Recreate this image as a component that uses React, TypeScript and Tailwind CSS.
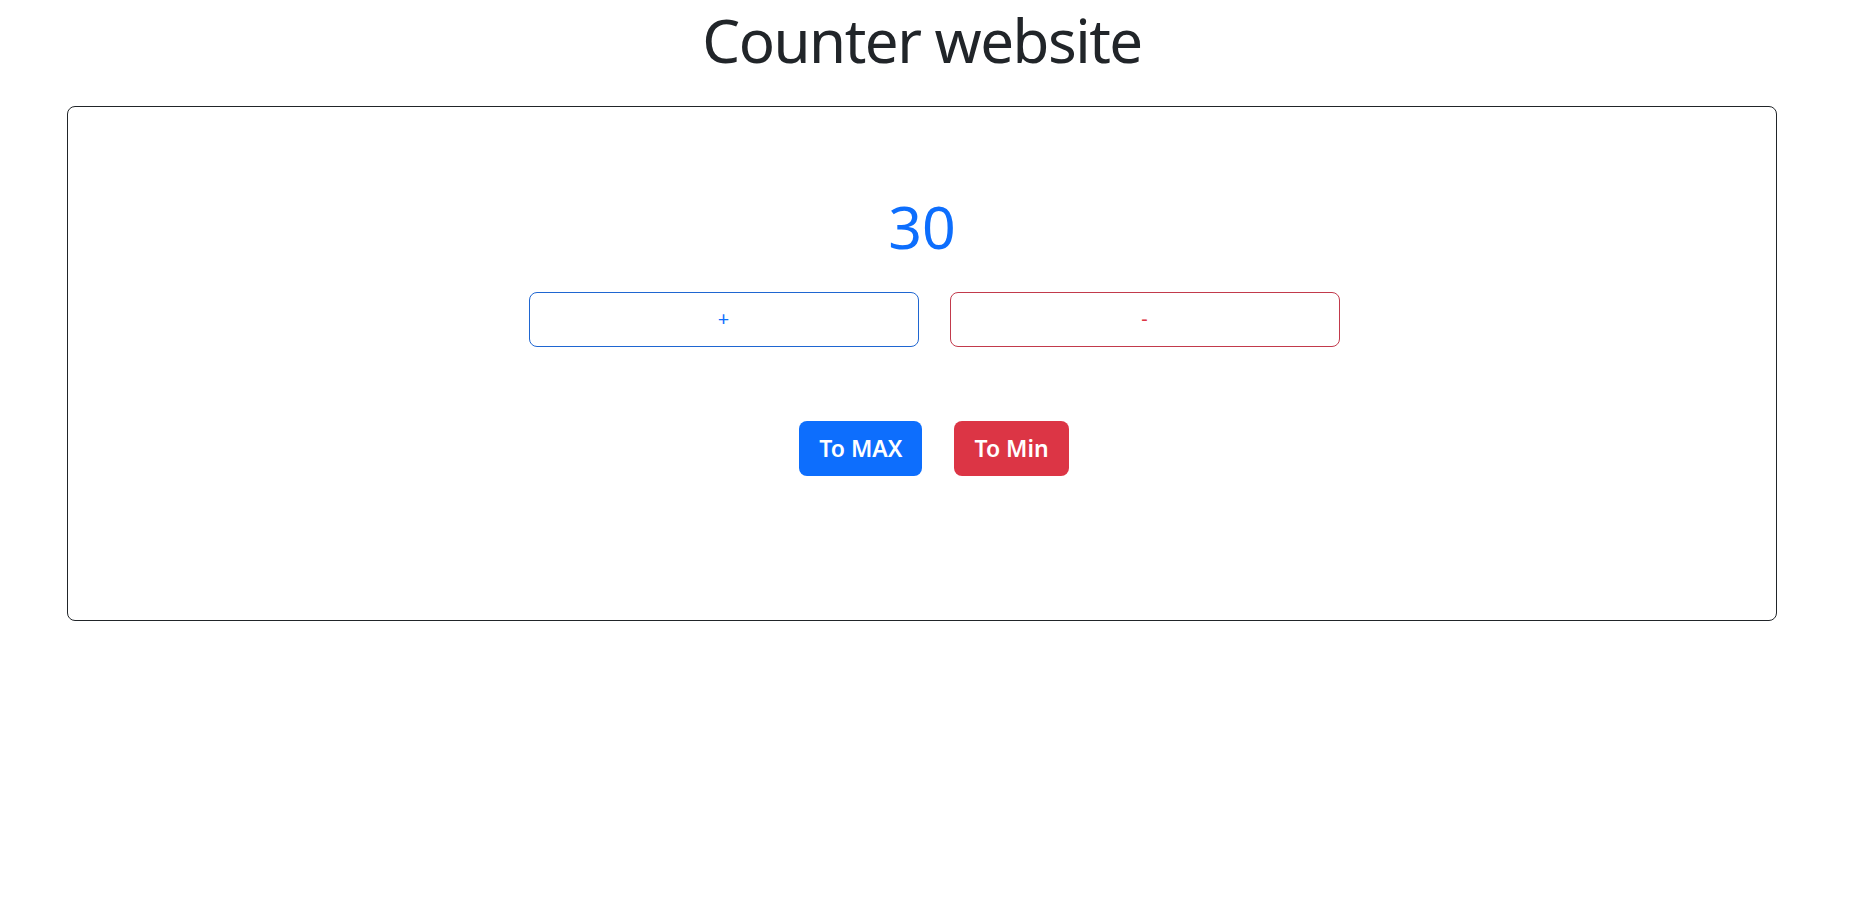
import { useState } from "react";

const MAX = 30;
const MIN = 0;

export default function App() {
  const [count, setCount] = useState(30);

  return (
    <div className="min-h-screen bg-white font-['Noto_Sans','Open_Sans',sans-serif] text-[#212529]">
      <div className="ml-[67px] w-[1710px]">
        <h1 className="pt-[4px] pb-[30px] text-center text-[60px] leading-[72px] font-normal tracking-[-1.5px]">
          Counter website
        </h1>

        <div className="h-[515px] rounded-[8px] border border-[#212529] pt-[84px]">
          <p className="text-center text-[59px] leading-[1.2] text-[#0d6efd]">{count}</p>

          <div className="mt-[30px] flex justify-center gap-[31px] pl-[24px]">
            <button
              onClick={() => setCount((c) => Math.min(MAX, c + 1))}
              className="h-[55px] w-[390px] rounded-[8px] border border-[#1f66d1] text-[20px] text-[#0d6efd]"
            >
              +
            </button>
            <button
              onClick={() => setCount((c) => Math.max(MIN, c - 1))}
              className="h-[55px] w-[390px] rounded-[8px] border border-[#c23a4c] text-[20px] text-[#dc3545]"
            >
              -
            </button>
          </div>

          <div className="mt-[74px] flex justify-center gap-[32px] pl-[24px]">
            <button
              onClick={() => setCount(MAX)}
              className="h-[55px] rounded-[8px] bg-[#0d6efd] px-[20px] text-[23px] font-semibold text-white"
            >
              To MAX
            </button>
            <button
              onClick={() => setCount(MIN)}
              className="h-[55px] rounded-[8px] bg-[#dc3545] px-[20px] text-[23px] font-semibold text-white"
            >
              To Min
            </button>
          </div>
        </div>
      </div>
    </div>
  );
}
